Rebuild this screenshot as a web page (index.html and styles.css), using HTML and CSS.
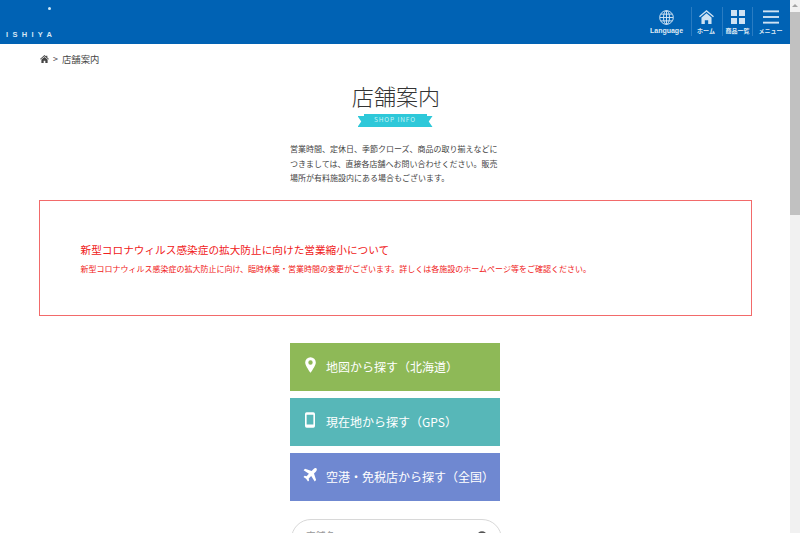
FILE: index.html
```html
<!DOCTYPE html>
<html lang="ja">
<head>
<meta charset="utf-8">
<title>店舗案内</title>
<link rel="stylesheet" href="styles.css">
</head>
<body>
<div class="page">
<header class="topbar">
  <div class="logo"><span class="logo-dot"></span><span class="logo-text">ISHIYA</span></div>
  <nav class="nav">
    <a class="nav-item nav-lang">
      <svg class="nav-icon" width="15" height="15" viewBox="0 0 16 16" fill="none" stroke="#d5e6f5" stroke-width="1"><circle cx="8" cy="8" r="7.300"/><ellipse cx="8" cy="8" rx="3.200" ry="7.300"/><path d="M1 8h14M2 4.400h12M2 11.600h12M8 1v14"/></svg>
      <span>Language</span>
    </a>
    <a class="nav-item nav-home">
      <svg class="nav-icon" width="15" height="14" viewBox="0 0 16 15" fill="#cfe2f3"><path d="M8 0 0 6.600l1 1.200L8 2l7 5.800 1-1.200z"/><path d="M8 3.600 2.600 8v7h3.600v-4h3.600v4h3.600V8z"/></svg>
      <span>ホーム</span>
    </a>
    <a class="nav-item nav-items">
      <svg class="nav-icon" width="14" height="14" viewBox="0 0 14 14" fill="#cfe2f3"><rect width="6" height="6"/><rect x="8" width="6" height="6"/><rect y="8" width="6" height="6"/><rect x="8" y="8" width="6" height="6"/></svg>
      <span>商品一覧</span>
    </a>
    <a class="nav-item nav-menu">
      <svg class="nav-icon" width="16" height="14" viewBox="0 0 17 14" fill="#cfe2f3"><rect width="17" height="2"/><rect y="6" width="17" height="2"/><rect y="12" width="17" height="2"/></svg>
      <span>メニュー</span>
    </a>
  </nav>
</header>
<div class="crumbs">
  <svg class="crumb-home" width="9" height="8" viewBox="0 0 16 14" fill="#444"><path d="M8 0 0 7l1 1 7-6 7 6 1-1-3-2.600V1h-2v1.700z"/><path d="M8 3.500 2.500 8v6H6.500V10h3v4h4V8z"/></svg>
  <span class="crumb-sep">&gt;</span>
  <span>店舗案内</span>
</div>
<main class="main">
  <h1 class="title">店舗案内</h1>
  <div class="ribbon"><span class="ribbon-band">SHOP INFO</span></div>
  <p class="lead">営業時間、定休日、季節クローズ、商品の取り揃えなどにつきましては、直接各店舗へお問い合わせください。販売場所が有料施設内にある場合もございます。</p>
  <section class="notice">
    <h2 class="notice-title">新型コロナウィルス感染症の拡大防止に向けた営業縮小について</h2>
    <p class="notice-text">新型コロナウィルス感染症の拡大防止に向け、臨時休業・営業時間の変更がございます。詳しくは各施設のホームページ等をご確認ください。</p>
  </section>
  <div class="actions">
    <a class="action action-green">
      <span class="action-slot"><svg width="11" height="16" viewBox="0 0 12 17" fill="#fff"><path fill-rule="evenodd" d="M6 0a5.800 5.800 0 0 0-5.800 5.800C.2 9.400 6 17 6 17s5.800-7.600 5.800-11.200A5.800 5.800 0 0 0 6 0zm0 3.400a2.400 2.400 0 1 1 0 4.800 2.400 2.400 0 0 1 0-4.800z"/></svg></span>
      <span>地図から探す（北海道）</span>
    </a>
    <a class="action action-teal">
      <span class="action-slot"><svg width="10" height="16" viewBox="0 0 11 17" fill="#fff"><path fill-rule="evenodd" d="M1.800 0h7.400A1.800 1.800 0 0 1 11 1.800v13.400A1.800 1.800 0 0 1 9.200 17H1.800A1.800 1.800 0 0 1 0 15.200V1.800A1.800 1.800 0 0 1 1.800 0zm0 2.600v10.800h7.400V2.600z"/></svg></span>
      <span>現在地から探す（GPS）</span>
    </a>
    <a class="action action-blue">
      <span class="action-slot"><svg width="14" height="14" viewBox="0 0 14 14" fill="#fff"><path d="M13.500.4c-.7-.6-2-.4-2.900.5L8.600 2.900 2 .8.600 2.200l5.300 3.500-2.300 2.500-2-.4L.5 9l2.600 1.800L5 13.500l1.100-1.100-.4-2 2.500-2.300 3.500 5.300 1.400-1.400-2.100-6.600 2-2c.9-.9 1.100-2.200.5-3z"/></svg></span>
      <span>空港・免税店から探す（全国）</span>
    </a>
  </div>
  <div class="search">
    <span class="search-hint">店舗名</span>
    <svg class="search-icon" width="12" height="12" viewBox="0 0 12 12" fill="none" stroke="#555" stroke-width="2"><circle cx="5" cy="5" r="3.800"/><path d="m8 8 3.500 3.500"/></svg>
  </div>
</main>
</div>
<div class="scrollbar"><span class="scroll-arrow"></span><span class="scroll-thumb"></span></div>
</body>
</html>
```
FILE: styles.css
```css
* { box-sizing: border-box; }
html, body { margin: 0; height: 100%; overflow: hidden; }
body {
  font-family: "Noto Sans CJK JP", "Noto Sans", sans-serif;
  color: #444;
  background: #fff;
  width: 800px;
  height: 533px;
  display: flex;
}
.page { width: 790px; height: 533px; overflow: hidden; flex: none; }
.scrollbar {
  width: 10px; height: 533px;
  background: #f1f1f1;
  display: flex; flex-direction: column; align-items: center;
  padding-top: 4px;
}
.scroll-arrow {
  width: 0; height: 0;
  border-left: 3px solid transparent;
  border-right: 3px solid transparent;
  border-bottom: 3px solid #a3a3a3;
}
.scroll-thumb { margin-top: 5px; width: 10px; height: 203px; background: #c1c1c1; }
.topbar {
  height: 44px;
  background: #0062b4;
  display: flex;
  justify-content: space-between;
}
.logo { width: 60px; padding: 7px 0 0 6px; display: flex; flex-direction: column; }
.logo-dot { width: 3px; height: 3px; margin-left: 42px; background: #cfe8f8; border-radius: 50%; }
.logo-text {
  margin-top: 20px;
  font: 700 7.500px/9px "Liberation Sans", sans-serif;
  letter-spacing: 4.300px;
  color: #d5e6f5;
  white-space: nowrap;
}
.nav { display: flex; padding-top: 7px; height: 37px; }
.nav-item {
  display: flex; flex-direction: column; align-items: center; justify-content: space-between;
  height: 29px;
  color: #dfeaf5;
  font-size: 6px;
  line-height: 8px;
  font-weight: 700;
  padding: 3px 0 1px;
  border-left: 1px solid #2a7cc2;
  white-space: nowrap;
}
.nav-lang { width: 48px; border-left: 0; font-size: 7px; font-family: "Liberation Sans", sans-serif; padding-right: 1px; }
.nav-home { width: 31px; padding-right: 2px; }
.nav-items { width: 30px; }
.nav-menu { width: 38px; padding-right: 2px; }
.nav-icon { display: block; flex: none; }
.crumbs {
  padding-left: 40px;
  height: 29px;
  display: flex; align-items: center; gap: 4px;
  font-size: 9.330px;
  color: #444;
}
.crumb-sep { font-size: 9px; }
.main { display: flex; flex-direction: column; align-items: center; }
.title {
  margin: 6px 0 0 2px;
  font-size: 22px;
  line-height: 32px;
  font-weight: 300;
  color: #333;
  letter-spacing: .100px;
}
.ribbon {
  margin-top: 3px;
  width: 75px; height: 13px;
  background:
    linear-gradient(#2bb4c6, #2bb4c6) 5px 10px / 65px 3px no-repeat,
    #fff;
  position: relative;
  display: flex; justify-content: center;
}
.ribbon::before {
  content: "";
  position: absolute; inset: 2px 0 0;
  background: #2ec8d9;
  clip-path: polygon(0 0, 100% 0, 95% 50%, 100% 100%, 0 100%, 5% 50%);
}
.ribbon-band {
  position: relative;
  width: 63px; height: 11px;
  background: #2ec8d9;
  color: #c9f2f6;
  font-size: 6.500px;
  line-height: 11px;
  letter-spacing: .900px;
  text-align: center;
}
.lead {
  margin: 15px 0 0;
  width: 210px;
  font-size: 8px;
  line-height: 14.670px;
  color: #444;
  font-weight: 400;
}
.notice {
  margin-top: 14px;
  width: 713px;
  height: 116px;
  border: 1px solid #f26a6a;
  padding: 40px 40px 0 41px;
  color: #f02020;
}
.notice-title { margin: 0; font-size: 10.670px; line-height: 18px; font-weight: 400; }
.notice-text { margin: 3px 0 0; font-size: 8px; line-height: 14px; }
.actions { margin-top: 27px; display: flex; flex-direction: column; gap: 7px; }
.action {
  width: 210px; height: 48px;
  display: flex; align-items: center;
  padding: 0 0 2px 10px; gap: 6px;
  color: #fff;
  font-size: 12px;
  font-weight: 400;
}
.action-slot { width: 20px; display: flex; justify-content: center; margin-top: -3px; }
.action-green { background: #8eb957; }
.action-teal { background: #57b7b8; }
.action-blue { background: #6f88d1; }
.search {
  margin: 18px 0 0 2px;
  width: 211px; height: 40px;
  border: 1px solid #d8d8d8;
  border-radius: 20px;
  padding: 9px 12px 0 14px;
  display: flex; justify-content: space-between; align-items: flex-start;
  font-size: 10px;
  color: #999;
}
.search-hint { line-height: 14px; }
.search-icon { margin-top: 2px; }
```
